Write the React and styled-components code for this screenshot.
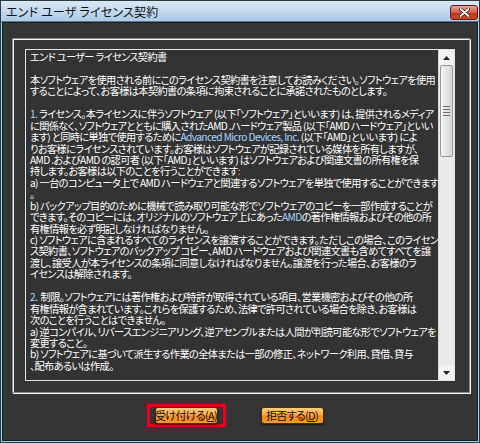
import React from "react";
import styled, { createGlobalStyle } from "styled-components";

const GlobalStyle = createGlobalStyle`
  html, body {
    margin: 0;
    padding: 0;
    background: #2b2b2b;
  }
  body {
    font-family: "Noto Sans CJK JP", "Noto Sans", sans-serif;
  }
`;

const Window = styled.div`
  width: 480px;
  height: 443px;
  box-sizing: border-box;
  display: flex;
  flex-direction: column;
  border: 1px solid #2d3a42;
  background: #8fd4ea;
`;

const TitleBar = styled.div`
  height: 20px;
  display: flex;
  align-items: center;
  justify-content: space-between;
  padding: 0 1px 0 5px;
  background: linear-gradient(to bottom, #dbe9f5, #c4daee 45%, #adc9e4);
  border-bottom: 1px solid #5d7688;
`;

const Title = styled.span`
  font-size: 12px;
  color: #111;
  font-feature-settings: "palt";
  letter-spacing: 0.2px;
`;

const CloseButton = styled.div`
  width: 26px;
  height: 13px;
  margin-top: 2px;
  border: 1px solid #5a2018;
  border-radius: 3px;
  background: linear-gradient(to bottom, #e8a496, #d45a44 50%, #b8331e 51%, #c94a30);
  display: flex;
  align-items: center;
  justify-content: center;
`;

const Body = styled.div`
  flex: 1;
  background: #353535;
  margin: 0 1px 1px 1px;
  border: 1px solid #1e1e1e;
  display: flex;
  flex-direction: column;
  padding: 15px 7px 0 9px;
`;

const GroupFrame = styled.div`
  height: 355px;
  box-sizing: border-box;
  border: 1px solid #8c8c8c;
  box-shadow: inset 1px 1px 0 #f2f2f2, 1px 1px 0 #f2f2f2;
  padding: 10px 14px 11px 12px;
  display: flex;
`;

const TextBox = styled.div`
  flex: 1;
  display: flex;
  border: 1px solid #e4e4e4;
  background: #333333;
  overflow: hidden;
`;

const TextContent = styled.div`
  flex: 1;
  padding: 1px 0 0 4px;
  overflow: hidden;
  color: #ffffff;
  font-size: 10.2px;
  letter-spacing: -0.62px;
  line-height: 11.45px;
  font-feature-settings: "palt";
`;

const Line = styled.div`
  white-space: pre;
  height: 11.45px;
`;

const Em = styled.span`
  color: ${(p) => (p.$tone === "orange" ? "#f0a040" : "#a8d4ff")};
`;

const ScrollBar = styled.div`
  width: 15px;
  display: flex;
  flex-direction: column;
  background: #ececec;
  border-left: 1px solid #d8d8d8;
`;

const ArrowButton = styled.div`
  height: 15px;
  display: flex;
  align-items: center;
  justify-content: center;
  background: #f2f2f2;
`;

const Thumb = styled.div`
  height: 92px;
  margin: 0 1px;
  box-sizing: border-box;
  border: 1px solid #9a9a9a;
  border-radius: 2px;
  background: linear-gradient(to right, #f4f4f4, #e2e2e2 55%, #d6d6d6);
  display: flex;
  flex-direction: column;
  align-items: center;
  justify-content: center;
  gap: 2px;
`;

const Grip = styled.div`
  width: 7px;
  height: 1px;
  background: #6e6e6e;
`;

const Track = styled.div`
  flex: 1;
  background: #eaeaea;
`;

const Footer = styled.div`
  flex: 1;
  display: flex;
  align-items: center;
  justify-content: center;
  gap: 35px;
  padding: 0 12px 2px 0;
`;

const Highlight = styled.div`
  border: 3px solid #e8001c;
  padding: 0 5px;
  display: flex;
`;

const Button = styled.div`
  width: 63px;
  height: 17px;
  box-sizing: border-box;
  border: 1px solid #4a2e0c;
  border-radius: 3px;
  background: linear-gradient(to bottom, #ffcf82, #fda640 45%, #f28a14 55%, #f79a2c);
  box-shadow: 0 1px 2px rgba(0, 0, 0, 0.6);
  display: flex;
  align-items: center;
  justify-content: center;
  font-size: 11px;
  letter-spacing: -0.7px;
  line-height: 15px;
  color: #111;
  font-feature-settings: "palt";
  white-space: nowrap;
`;

const Key = styled.span`
  text-decoration: underline;
`;

const lines = [
  ["エンド ユーザー ライセンス契約書"],
  [""],
  ["本ソフトウェアを使用される前にこのライセンス契約書を注意してお読みください。ソフトウェアを使用"],
  ["することによって、お客様は本契約書の条項に拘束されることに承諾されたものとします。"],
  [""],
  [{ t: "1." }, " ライセンス。本ライセンスに伴うソフトウェア (以下「ソフトウェア」といいます) は、提供されるメディア"],
  ["に関係なく、ソフトウェアとともに購入されたAMD .ハードウェア製品 (以下「AMD ハードウェア」といい"],
  ["ます) と同時に単独で使用するために", { t: "Advanced Micro Devices, Inc." }, " (以下「AMD」といいます) によ"],
  ["りお客様にライセンスされています。お客様はソフトウェアが記録されている媒体を所有しますが、"],
  ["AMD .およびAMD の認可者 (以下「AMD」といいます) はソフトウェアおよび関連文書の所有権を保"],
  ["持します。お客様は以下のことを行うことができます", { t: ":", tone: "orange" }],
  ["a) 一台のコンピュータ上で AMD ハードウェアと関連するソフトウェアを単独で使用することができます"],
  ["。"],
  ["b) バックアップ目的のために機械で読み取り可能な形でソフトウェアのコピーを一部作成することが"],
  ["できます。そのコピーには、オリジナルのソフトウェア上にあった", { t: "AMD" }, "の著作権情報およびその他の所"],
  ["有権情報を必ず明記しなければなりません。"],
  ["c) ソフトウェアに含まれるすべてのライセンスを譲渡することができます。ただしこの場合、このライセン"],
  ["ス契約書、ソフトウェアのバックアップ コピー、AMD ハードウェアおよび関連文書も含めてすべてを譲"],
  ["渡し、譲受人が本ライセンスの条項に同意しなければなりません。譲渡を行った場合、お客様のラ"],
  ["イセンスは解除されます。"],
  [""],
  [{ t: "2." }, "  制限。ソフトウェアには著作権および特許が取得されている項目、営業機密およびその他の所"],
  ["有権情報が含まれています。これらを保護するため、法律で許可されている場合を除き、お客様は"],
  ["次のことを行うことはできません。"],
  ["a) 逆コンパイル、リバースエンジニアリング、逆アセンブルまたは人間が判読可能な形でソフトウェアを"],
  ["変更すること。"],
  ["b) ソフトウェアに基づいて派生する作業の全体または一部の修正、ネットワーク利用、貸借、貸与"],
  ["、配布あるいは作成。"],
];

const App = () => {
  return (
    <>
      <GlobalStyle />
      <Window>
        <TitleBar>
          <Title>エンド ユーザ ライセンス契約</Title>
          <CloseButton>
            <svg width="11" height="9" viewBox="0 0 11 9">
              <path
                d="M1.5 1 L9.5 8 M9.5 1 L1.5 8"
                stroke="#3a0f08"
                strokeWidth="3.2"
                strokeLinecap="round"
              />
              <path
                d="M1.5 1 L9.5 8 M9.5 1 L1.5 8"
                stroke="#ffffff"
                strokeWidth="1.8"
                strokeLinecap="round"
              />
            </svg>
          </CloseButton>
        </TitleBar>
        <Body>
          <GroupFrame>
            <TextBox>
              <TextContent>
                {lines.map((parts, i) => (
                  <Line key={i}>
                    {parts.map((p, j) =>
                      typeof p === "string" ? (
                        p
                      ) : (
                        <Em key={j} $tone={p.tone}>
                          {p.t}
                        </Em>
                      )
                    )}
                  </Line>
                ))}
              </TextContent>
              <ScrollBar>
                <ArrowButton>
                  <svg width="7" height="4" viewBox="0 0 7 4">
                    <path d="M0 4 L3.5 0 L7 4 Z" fill="#222" />
                  </svg>
                </ArrowButton>
                <Thumb>
                  <Grip />
                  <Grip />
                  <Grip />
                  <Grip />
                </Thumb>
                <Track />
                <ArrowButton>
                  <svg width="7" height="4" viewBox="0 0 7 4">
                    <path d="M0 0 L7 0 L3.5 4 Z" fill="#222" />
                  </svg>
                </ArrowButton>
              </ScrollBar>
            </TextBox>
          </GroupFrame>
          <Footer>
            <Highlight>
              <Button>
                受け付ける(<Key>A</Key>)
              </Button>
            </Highlight>
            <Button>
              拒否する(<Key>D</Key>)
            </Button>
          </Footer>
        </Body>
      </Window>
    </>
  );
};

export default App;
